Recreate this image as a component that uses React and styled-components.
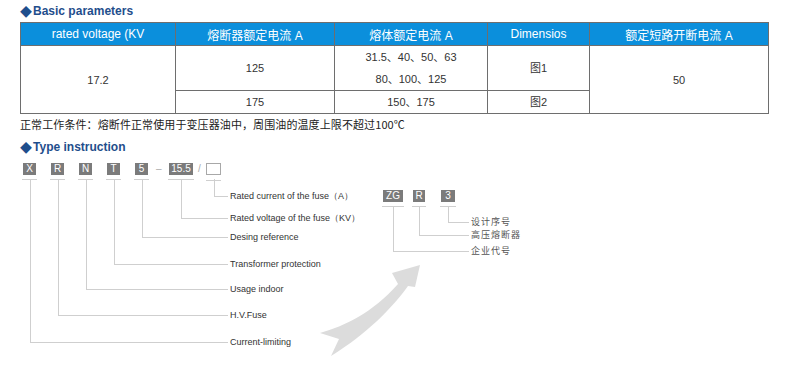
import React from 'react'
import styled, { createGlobalStyle } from 'styled-components';

const Global = createGlobalStyle`
  body {
    margin: 0;
    background: #fff;
    font-family: "Liberation Sans", Arial, "Noto Sans CJK SC", sans-serif;
  }
`;

const Page = styled.div`
  padding-left: 20px;
  width: 748px;
`;

const Heading = styled.div`
  display: flex;
  align-items: center;
  height: 22px;
  margin-top: ${p => p.$gap || 0}px;
  font-size: 12px;
  font-weight: bold;
  color: #1f4e8c;
  &::before {
    content: "◆";
    font-size: 12px;
    margin-right: 1px;
  }
`;

const Table = styled.table`
  width: 748px;
  border-collapse: collapse;
  table-layout: fixed;
  border: 1px solid #6e6e6e;
  font-size: 11px;
  color: #333;
`;

const Th = styled.th`
  height: 22px;
  padding: 0;
  background: #0b8fdc;
  color: #fff;
  font-weight: normal;
  font-size: 12px;
  border: 1px solid #6e6e6e;
  font-family: "Liberation Sans", Arial, "Noto Sans CJK SC", sans-serif;
`;

const Td = styled.td`
  height: ${p => p.$h || 22}px;
  padding: 0;
  text-align: center;
  border: 1px solid #6e6e6e;
  line-height: ${p => p.$lh || 14}px;
`;

const Note = styled.div`
  margin-top: 3px;
  font-size: 11px;
  line-height: 14px;
  color: #222;
  font-family: "Noto Sans CJK SC", sans-serif;
  letter-spacing: 0.1px;
`;

const Diagram = styled.div`
  position: relative;
  height: 223px;
  margin-left: -20px;
`;

const Code = styled.div`
  position: absolute;
  left: ${p => p.$x}px;
  top: ${p => p.$y}px;
  width: ${p => p.$w}px;
  height: 12px;
  box-sizing: border-box;
  background: ${p => (p.$empty ? '#fff' : '#7b7b7b')};
  border: ${p => (p.$empty ? '1px solid #a8a8a8' : 'none')};
  color: #fff;
  font-size: 10px;
  line-height: 12px;
  text-align: center;
  &::after {
    content: "";
    position: absolute;
    left: -1px;
    right: -1px;
    top: 16px;
    border-top: 1px solid #cfcfcf;
  }
`;

const Sep = styled.span`
  position: absolute;
  left: ${p => p.$x}px;
  top: ${p => p.$y}px;
  font-size: 10px;
  line-height: 12px;
  color: #aaa;
`;

const Leader = styled.div`
  position: absolute;
  left: ${p => p.$x}px;
  top: ${p => p.$y}px;
  width: ${p => p.$w}px;
  height: ${p => p.$h}px;
  border-left: 1px solid #cfcfcf;
  border-bottom: 1px solid #cfcfcf;
`;

const Label = styled.span`
  position: absolute;
  left: ${p => p.$x}px;
  top: ${p => p.$y - 7}px;
  font-size: 9px;
  line-height: 14px;
  color: ${p => (p.$cjk ? '#555' : '#333')};
  white-space: nowrap;
  font-family: ${p => (p.$cjk ? '"Noto Sans CJK SC", sans-serif' : '"Liberation Sans", Arial, sans-serif')};
  letter-spacing: ${p => (p.$cjk ? '1px' : '0')};
`;

const Arrow = styled.svg`
  position: absolute;
  left: 0;
  top: 0;
`;

const codesLeft = [
  { t: 'X', x: 23, w: 13, line: 184, label: 'Current-limiting' },
  { t: 'R', x: 51, w: 13, line: 157, label: 'H.V.Fuse' },
  { t: 'N', x: 79, w: 13, line: 131, label: 'Usage indoor' },
  { t: 'T', x: 107, w: 13, line: 106, label: 'Transformer protection' },
  { t: '5', x: 135, w: 13, line: 79, label: 'Desing reference' },
  { t: '15.5', x: 169, w: 24, line: 60, label: 'Rated voltage of the fuse（KV）' },
  { t: '', x: 206, w: 15, line: 38, label: 'Rated current of the fuse（A）', empty: true },
];

const codesRight = [
  { t: 'ZG', x: 383, w: 20, line: 93, label: '企业代号' },
  { t: 'R', x: 413, w: 12, line: 77, label: '高压熔断器' },
  { t: '3', x: 441, w: 14, line: 64, label: '设计序号' },
];

function Branch({ item, top, underline, endX }) {
  const cx = Math.round(item.x + item.w / 2);
  return (
    <>
      <Code $x={item.x} $y={top} $w={item.w} $empty={item.empty}>{item.t}</Code>
      <Leader $x={cx} $y={underline} $w={endX - cx} $h={item.line - underline} />
      <Label $x={endX + 3} $y={item.line} $cjk={/[\u4e00-\u9fff]/.test(item.label)}>{item.label}</Label>
    </>
  );
}

export default function App() {
  return (
    <Page>
      <Global />
      <Heading>Basic parameters</Heading>
      <Table>
        <colgroup>
          <col style={{ width: 155 }} />
          <col style={{ width: 159 }} />
          <col style={{ width: 153 }} />
          <col style={{ width: 102 }} />
          <col style={{ width: 179 }} />
        </colgroup>
        <thead>
          <tr>
            <Th>rated voltage (KV</Th>
            <Th>熔断器额定电流 A</Th>
            <Th>熔体额定电流 A</Th>
            <Th>Dimensios</Th>
            <Th>额定短路开断电流 A</Th>
          </tr>
        </thead>
        <tbody>
          <tr>
            <Td rowSpan={2}>17.2</Td>
            <Td $h={44}>125</Td>
            <Td $h={44} $lh={22}>31.5、40、50、63<br />80、100、125</Td>
            <Td $h={44}>图1</Td>
            <Td rowSpan={2}>50</Td>
          </tr>
          <tr>
            <Td>175</Td>
            <Td>150、175</Td>
            <Td>图2</Td>
          </tr>
        </tbody>
      </Table>
      <Note>正常工作条件：熔断件正常使用于变压器油中，周围油的温度上限不超过100℃</Note>
      <Heading $gap={5}>Type instruction</Heading>
      <Diagram>
        <Arrow width="786" height="223" viewBox="0 0 786 223">
          <path
            d="M320 175 C 345 168 372 155 398 126 L 392 115 L 420 107 L 415 129 L 408 128 C 392 150 368 175 331 198 L 339 181 Z"
            fill="#dcdcdc"
          />
        </Arrow>
        <Sep $x={156} $y={5}>–</Sep>
        <Sep $x={198} $y={5}>/</Sep>
        {codesLeft.map(c => (
          <Branch key={c.label} item={c} top={5} underline={21} endX={227} />
        ))}
        {codesRight.map(c => (
          <Branch key={c.label} item={c} top={32} underline={48} endX={468} />
        ))}
      </Diagram>
    </Page>
  );
}
